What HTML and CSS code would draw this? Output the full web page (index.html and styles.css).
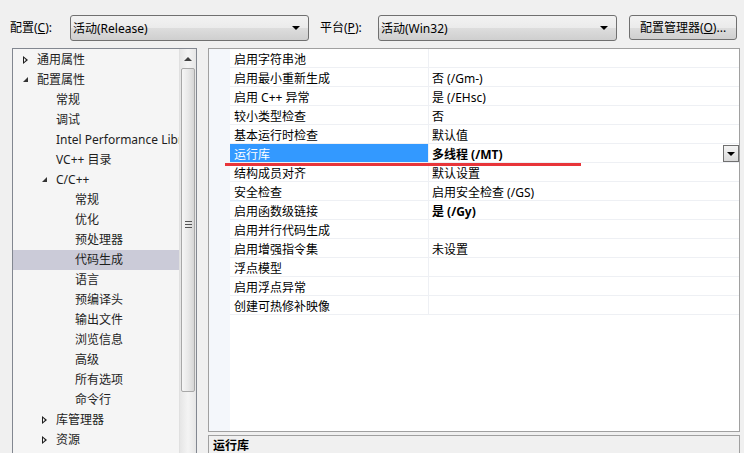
FILE: index.html
```html
<!doctype html>
<html lang="zh-CN">
<head>
    <meta charset="UTF-8">
    <title>属性页</title>
    <link rel="stylesheet" href="styles.css">
</head>
<body>
    <div class="toolbar">
        <span class="label">配置(<u>C</u>):</span>
        <div class="combo"><span>活动(Release)</span><i class="arrow"></i></div>
        <span class="label label-p">平台(<u>P</u>):</span>
        <div class="combo"><span>活动(Win32)</span><i class="arrow"></i></div>
        <div class="btn">配置管理器(<u>O</u>)...</div>
    </div>

    <div class="main">
        <div class="tree">
            <ul class="tree-list">
                <li class="l1"><b class="exp closed"></b>通用属性</li>
                <li class="l1"><b class="exp open"></b>配置属性</li>
                <li class="l2">常规</li>
                <li class="l2">调试</li>
                <li class="l2">Intel Performance Library</li>
                <li class="l2">VC++ 目录</li>
                <li class="l2"><b class="exp open"></b>C/C++</li>
                <li class="l3">常规</li>
                <li class="l3">优化</li>
                <li class="l3">预处理器</li>
                <li class="l3 active">代码生成</li>
                <li class="l3">语言</li>
                <li class="l3">预编译头</li>
                <li class="l3">输出文件</li>
                <li class="l3">浏览信息</li>
                <li class="l3">高级</li>
                <li class="l3">所有选项</li>
                <li class="l3">命令行</li>
                <li class="l2"><b class="exp closed"></b>库管理器</li>
                <li class="l2"><b class="exp closed"></b>资源</li>
            </ul>
            <div class="scrollbar">
                <div class="scroll-up"><i></i></div>
                <div class="thumb"><span class="grip"></span></div>
            </div>
        </div>

        <div class="right">
            <div class="grid">
                <div class="margin"></div>
                <div class="rows">
                    <div class="row"><div class="name">启用字符串池</div><div class="value"></div></div>
                    <div class="row"><div class="name">启用最小重新生成</div><div class="value">否 (/Gm-)</div></div>
                    <div class="row"><div class="name">启用 C++ 异常</div><div class="value">是 (/EHsc)</div></div>
                    <div class="row"><div class="name">较小类型检查</div><div class="value">否</div></div>
                    <div class="row"><div class="name">基本运行时检查</div><div class="value">默认值</div></div>
                    <div class="row selected"><div class="name">运行库</div><div class="value bold">多线程 (/MT)<span class="drop"><i></i></span></div></div>
                    <div class="row"><div class="name">结构成员对齐</div><div class="value">默认设置</div></div>
                    <div class="row"><div class="name">安全检查</div><div class="value">启用安全检查 (/GS)</div></div>
                    <div class="row"><div class="name">启用函数级链接</div><div class="value bold">是 (/Gy)</div></div>
                    <div class="row"><div class="name">启用并行代码生成</div><div class="value"></div></div>
                    <div class="row"><div class="name">启用增强指令集</div><div class="value">未设置</div></div>
                    <div class="row"><div class="name">浮点模型</div><div class="value"></div></div>
                    <div class="row"><div class="name">启用浮点异常</div><div class="value"></div></div>
                    <div class="row"><div class="name">创建可热修补映像</div><div class="value"></div></div>
                </div>
                <div class="mark"></div>
            </div>
            <div class="desc">运行库</div>
        </div>
    </div>
</body>
</html>
```

FILE: styles.css
```css
*{
    padding: 0;
    margin: 0;
    box-sizing: border-box;
}
body{
    width: 744px;
    height: 453px;
    overflow: hidden;
    background-color: #f0f0f0;
    font-family: "Segoe UI", "Noto Sans", "Noto Sans CJK SC", sans-serif;
    font-size: 12px;
    color: #000;
}
ul,li{
    list-style: none;
}

/* 顶部配置栏 */
.toolbar{
    height: 48px;
    display: flex;
    align-items: flex-start;
    padding: 15px 0 0 10px;
}
.label{
    line-height: 26px;
    width: 60px;
}
.label-p{
    width: 58px;
    margin-left: 11px;
}
u{
    text-decoration: underline;
    text-underline-offset: 1px;
}
.combo{
    width: 239px;
    height: 26px;
    border: 1px solid #707070;
    border-radius: 3px;
    background: linear-gradient(#f2f2f2, #ebebeb 50%, #dddddd 51%, #cfcfcf);
    display: flex;
    align-items: center;
    justify-content: space-between;
    padding: 0 8px 0 2px;
}
.arrow{
    width: 0;
    height: 0;
    border-left: 4px solid transparent;
    border-right: 4px solid transparent;
    border-top: 4px solid #000;
}
.btn{
    width: 108px;
    height: 25px;
    margin-left: 12px;
    border: 1px solid #707070;
    border-radius: 3px;
    background: linear-gradient(#f2f2f2, #ebebeb 50%, #dddddd 51%, #cfcfcf);
    text-align: center;
    line-height: 23px;
}

/* 主体 */
.main{
    display: flex;
    padding-left: 12px;
}
.tree{
    width: 185px;
    height: 420px;
    border: 1px solid #828790;
    background-color: #f5f5f5;
    display: flex;
}
.tree-list{
    width: 166px;
    padding-top: 1px;
    overflow: hidden;
}
.tree-list li{
    height: 20px;
    line-height: 20px;
    white-space: nowrap;
    overflow: hidden;
    color: #1e1e1e;
    position: relative;
}
.tree-list .l1{
    padding-left: 24px;
}
.tree-list .l2{
    padding-left: 43px;
}
.tree-list .l3{
    padding-left: 62px;
}
.tree-list li.active{
    background-color: #cbcbd8;
}
.exp{
    position: absolute;
    top: 6px;
    width: 0;
    height: 0;
}
.l1 .exp{
    left: 10px;
}
.l2 .exp{
    left: 29px;
}
.exp.closed{
    top: 6px;
    border-top: 4px solid transparent;
    border-bottom: 4px solid transparent;
    border-left: 5px solid #1e1e1e;
}
.exp.closed::after{
    content: "";
    position: absolute;
    left: -4px;
    top: -2px;
    border-top: 2px solid transparent;
    border-bottom: 2px solid transparent;
    border-left: 2px solid #f5f5f5;
}
.exp.open{
    top: 7px;
    border-left: 5px solid transparent;
    border-bottom: 5px solid #333;
}

/* 滚动条 */
.scrollbar{
    width: 17px;
    border-left: 1px solid #e0e0e0;
    background: linear-gradient(90deg, #e6e6e6, #f4f4f4 50%, #e6e6e6);
}
.scroll-up{
    height: 19px;
    display: flex;
    justify-content: center;
    align-items: center;
}
.scroll-up i{
    width: 0;
    height: 0;
    border-left: 4px solid transparent;
    border-right: 4px solid transparent;
    border-bottom: 4px solid #404040;
}
.thumb{
    height: 324px;
    margin: 0 1px;
    border: 1px solid #a8a8a8;
    border-radius: 2px;
    background: linear-gradient(90deg, #f6f6f6, #e9e9e9 50%, #d6d6d6);
    display: flex;
    justify-content: center;
    align-items: center;
    padding-bottom: 12px;
}
.grip{
    width: 7px;
    height: 7px;
    border-top: 1px solid #555;
    border-bottom: 1px solid #555;
    position: relative;
}
.grip::after{
    content: "";
    position: absolute;
    left: 0;
    right: 0;
    top: 2px;
    border-top: 1px solid #555;
}

/* 右侧属性表 */
.right{
    margin-left: 11px;
    width: 532px;
}
.grid{
    height: 384px;
    border: 1px solid #a0a0a0;
    background-color: #fff;
    display: flex;
    position: relative;
}
.margin{
    width: 21px;
    background-color: #f4f7fb;
}
.rows{
    flex: 1;
}
.row{
    height: 19px;
    display: flex;
    border-bottom: 1px solid #eef0f4;
}
.row .name{
    width: 199px;
    padding: 2px 0 0 4px;
    line-height: 18px;
    border-right: 1px solid #eef0f4;
    white-space: nowrap;
}
.row .value{
    flex: 1;
    padding: 2px 0 0 3px;
    line-height: 18px;
    position: relative;
    white-space: nowrap;
}
.value.bold{
    font-weight: bold;
}
.row.selected .name{
    background-color: #3399ff;
    color: #fff;
}
.drop{
    position: absolute;
    right: 0;
    top: 1px;
    width: 16px;
    height: 17px;
    border: 1px solid #707070;
    background: linear-gradient(#f4f4f4, #dadada);
    display: flex;
    justify-content: center;
    align-items: center;
}
.drop i{
    width: 0;
    height: 0;
    border-left: 4px solid transparent;
    border-right: 4px solid transparent;
    border-top: 4px solid #000;
}
.mark{
    position: absolute;
    left: 16px;
    top: 114px;
    width: 356px;
    height: 3px;
    background-color: #e8353a;
}
.desc{
    margin-top: 3px;
    height: 40px;
    border: 1px solid #a0a0a0;
    background-color: #f0f0f0;
    padding: 1px 0 0 4px;
    font-weight: bold;
    line-height: 18px;
}
```
